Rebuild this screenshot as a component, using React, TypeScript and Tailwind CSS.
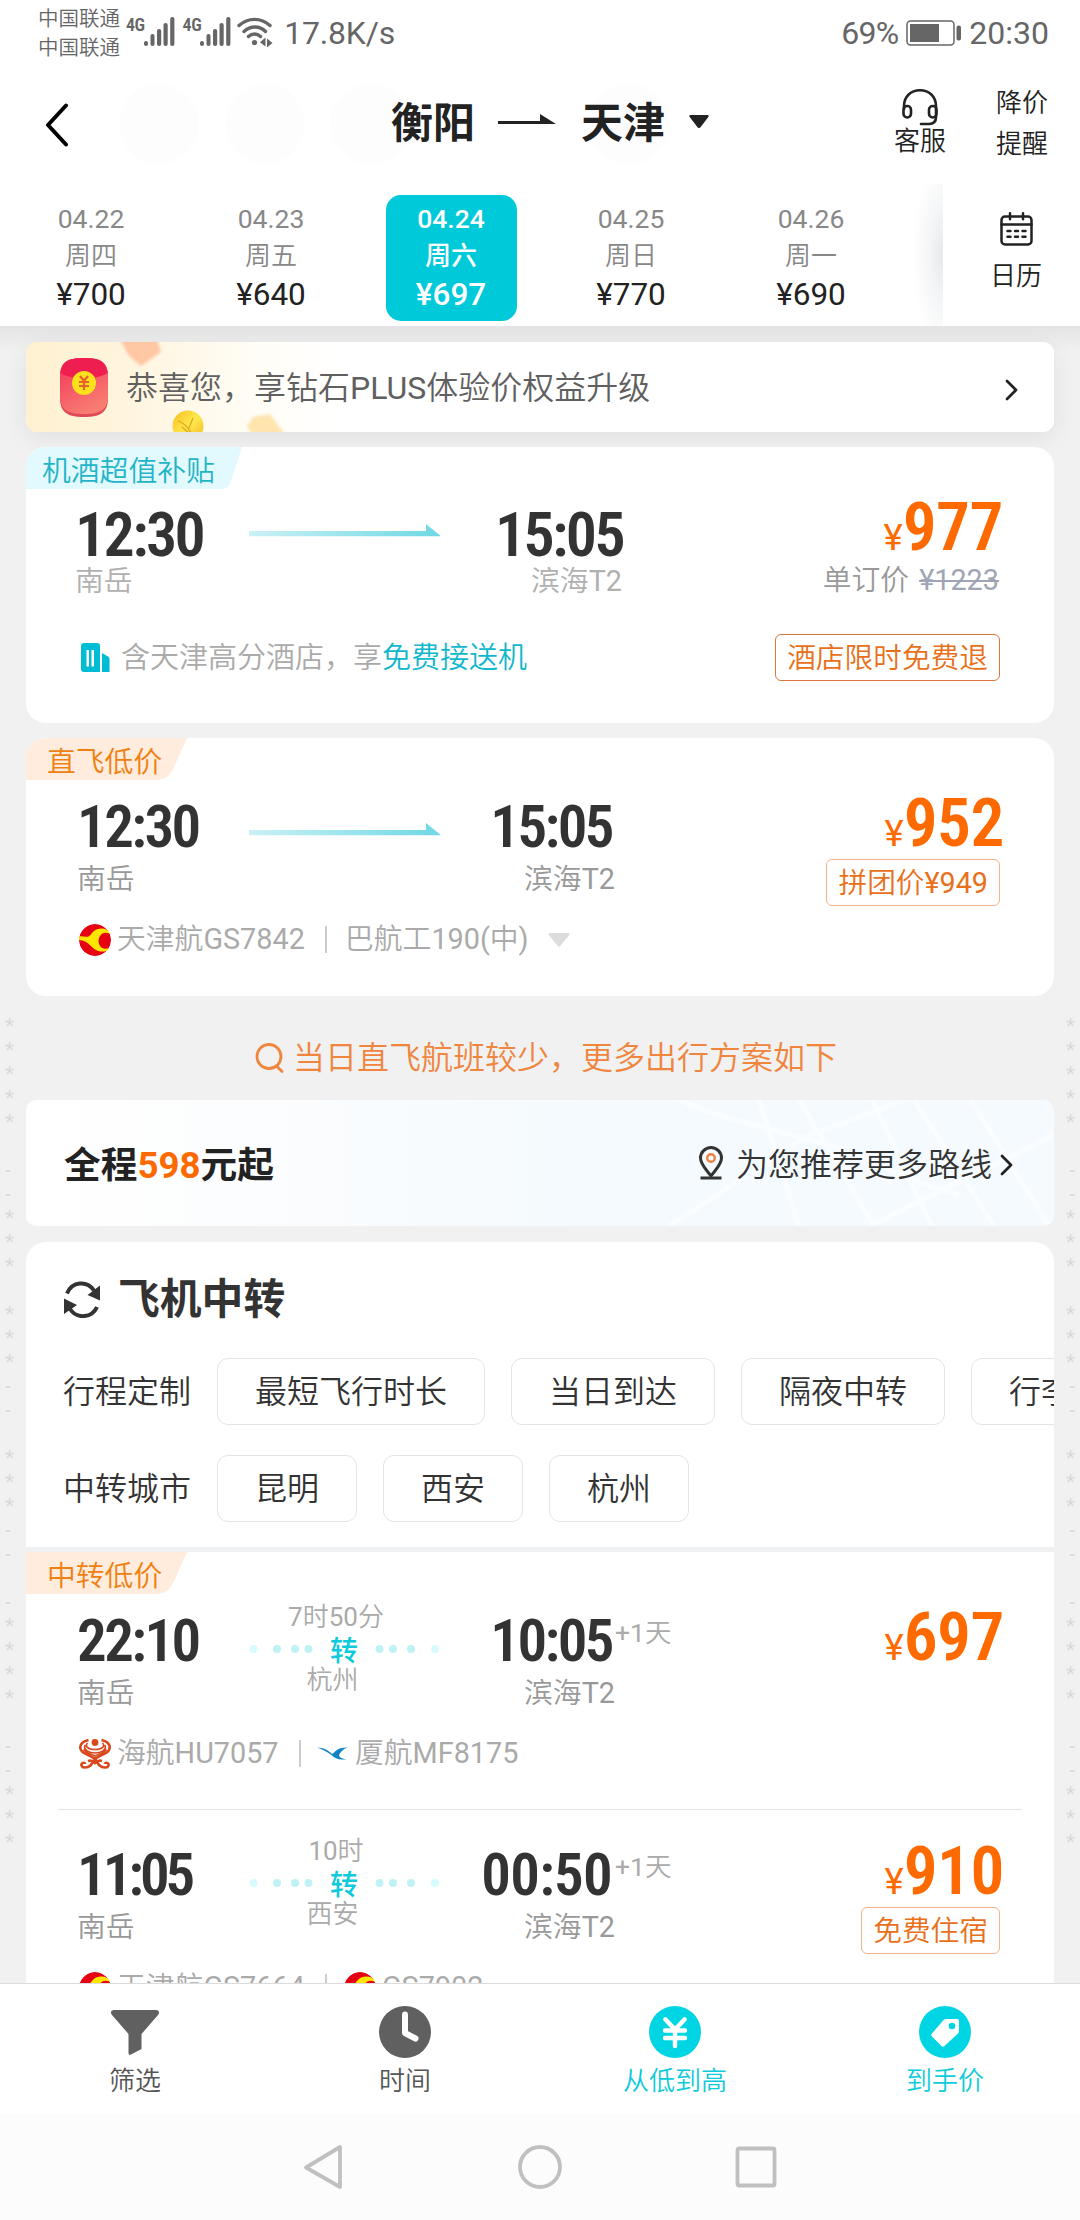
import type { ReactNode } from "react";

const days = [
  { date: "04.22", week: "周四", price: "¥700" },
  { date: "04.23", week: "周五", price: "¥640" },
  { date: "04.24", week: "周六", price: "¥697", active: true },
  { date: "04.25", week: "周日", price: "¥770" },
  { date: "04.26", week: "周一", price: "¥690" },
];

const planFilters = ["最短飞行时长", "当日到达", "隔夜中转", "行李直达"];
const cityFilters = ["昆明", "西安", "杭州"];

// watermark that runs down both page edges, one character per line
const watermark = "***** --*** ***-- ***-- -**** --***";

// the digit 1 is set tighter than the others
function digitSpacing(time: string) {
  const ones = time.split("1").length - 1;
  return [-0.7, -2.5, -4][ones];
}

function Signal() {
  return (
    <div className="flex items-start">
      <span className="font-['Roboto_Condensed'] text-[18px] leading-[18px] font-semibold tracking-[-0.5px] mt-[-1px]">4G</span>
      <svg width="31" height="30" viewBox="0 0 31 30" fill="#666" className="ml-[-1px]">
        <rect x="0" y="24" width="4" height="5" rx="2" />
        <rect x="6.5" y="17" width="4" height="12" rx="2" />
        <rect x="13" y="12" width="4.2" height="17" rx="2" />
        <rect x="19.5" y="6" width="4.2" height="23" rx="2" />
        <rect x="26.2" y="0" width="4.2" height="29" rx="2" />
      </svg>
    </div>
  );
}

function StatusBar() {
  return (
    <div className="h-[66px] flex items-start justify-between pl-[38px] pr-[31px] text-[#666]">
      <div className="flex items-start">
        <div className="text-[20.5px] leading-[29px] pt-[5px]">
          <p>中国联通</p>
          <p>中国联通</p>
        </div>
        <div className="flex pt-[17px] ml-[6px] gap-[8px]">
          <Signal />
          <Signal />
        </div>
        <svg width="36" height="30" viewBox="0 0 36 30" fill="none" stroke="#666" strokeWidth="3.4" strokeLinecap="round" className="mt-[17px] ml-[6px]">
          <path d="M2 8.5C11 .3 24 .3 33 8.5" />
          <path d="M7 14.5c6.500-6 15.500-6 21.500 0" />
          <path d="M11.500 19.500c3.500-3.300 8.500-3.300 12 0" />
          <circle cx="17.500" cy="25.500" r="2.600" fill="#666" stroke="none" />
          <path d="M28.500 20.500v9l-5.500-4.200zM30 21.500v9l5.500-4.500z" fill="#666" stroke="none" />
        </svg>
        <span className="text-[32px] leading-[32px] pt-[17px] ml-[11px] tracking-[-0.200px]">17.8K/s</span>
      </div>
      <div className="flex items-start text-[32px] leading-[32px] pt-[17px]">
        <span className="tracking-[-0.800px]">69%</span>
        <svg width="56" height="26" viewBox="0 0 56 26" className="ml-[8px] mt-[3px]">
          <rect x="1" y="1" width="47" height="24" rx="3.500" fill="none" stroke="#666" strokeWidth="1.500" />
          <rect x="4" y="4" width="29" height="18" fill="#666" />
          <rect x="50.500" y="5.500" width="4.500" height="15" rx="2" fill="#666" />
        </svg>
        <span className="ml-[7px]">20:30</span>
      </div>
    </div>
  );
}

function TitleBar() {
  return (
    <div className="relative h-[118px] flex items-start">
      <div className="absolute left-[119px] top-[18px] w-[80px] h-[80px] rounded-full bg-[#fdfdfd]" />
      <div className="absolute left-[225px] top-[18px] w-[80px] h-[80px] rounded-full bg-[#fdfdfd]" />
      <div className="absolute left-[330px] top-[18px] w-[80px] h-[80px] rounded-full bg-[#fdfdfd]" />
      <div className="absolute left-[590px] top-[18px] w-[80px] h-[80px] rounded-full bg-[#fdfdfd]" />
      <svg width="24" height="44" viewBox="0 0 24 44" fill="none" stroke="#000" strokeWidth="4" strokeLinecap="round" strokeLinejoin="round" className="ml-[45px] mt-[37px]">
        <path d="M21 2.500 3 22l18 19.500" />
      </svg>
      <div className="relative flex items-center h-[60px] mt-[27px] ml-[322px] text-[#222] text-[42px] font-['Roboto','Noto_Sans_CJK_SC',sans-serif] font-bold">
        <span>衡阳</span>
        <svg width="58" height="12" viewBox="0 0 58 12" fill="#222" className="ml-[23px] mt-[-8px]">
          <path d="M0 8h42V1l16 10H0z" />
        </svg>
        <span className="ml-[25px]">天津</span>
        <svg width="20" height="13" viewBox="0 0 20 13" fill="#222" className="ml-[24px] mt-[-3px]">
          <path d="M1.500 0h17c1 0 1.500 1 1 1.800l-8 10.400a1.800 1.800 0 0 1-3 0L.5 1.800C0 1 .5 0 1.500 0z" />
        </svg>
      </div>
      <div className="ml-auto w-[54px] flex flex-col items-center text-[26px] leading-[28px] text-[#222] pt-[22px]">
        <svg width="38" height="39" viewBox="0 0 38 39" fill="none" stroke="#222" strokeWidth="2.600" strokeLinecap="round">
          <path d="M3 21v-3C3 9 9.500 2.300 19 2.300S35 9 35 18v11c0 4.500-2.500 7-7 7h-8" />
          <rect x="2.500" y="18" width="7.500" height="11.500" rx="3.700" />
          <rect x="28" y="18" width="7.500" height="11.500" rx="3.700" />
        </svg>
        <span>客服</span>
      </div>
      <div className="ml-[49px] mr-[32px] text-[26px] leading-[41px] text-[#222] pt-[17px]">
        <p>降价</p>
        <p>提醒</p>
      </div>
    </div>
  );
}

function DateStrip() {
  return (
    <div className="h-[142px] flex">
      <div className="w-[943px] flex relative overflow-hidden pt-[11px] pl-[1px]">
        {days.map((d) => (
          <div key={d.date} className="w-[180px] shrink-0 flex justify-center">
            <div
              className={
                d.active
                  ? "w-[131px] h-[126px] rounded-[15px] bg-[#00cad9] text-white font-['Roboto','Noto_Sans_CJK_SC',sans-serif] font-medium flex flex-col items-center pt-[9px]"
                  : "w-[131px] h-[126px] text-[#888] flex flex-col items-center pt-[9px]"
              }
            >
              <span className="text-[26.500px] leading-[30px]">{d.date}</span>
              <span className="text-[26px] leading-[30px] mt-[7px]">{d.week}</span>
              <span className={d.active ? "text-[31.500px] leading-[36px] mt-[6px]" : "text-[31.500px] leading-[36px] mt-[6px] text-[#222]"}>
                {d.price}
              </span>
            </div>
          </div>
        ))}
        <div className="absolute right-0 top-0 w-[32px] h-full bg-[radial-gradient(ellipse_30px_100px_at_right,#e6e9ea_0%,#f5f6f7_50%,#fff_100%)]" />
      </div>
      <div className="flex-1 flex flex-col items-center text-[#222] pt-[28px] pl-[9px]">
        <svg width="33" height="34" viewBox="0 0 33 34" fill="none" stroke="#222" strokeWidth="2.500" strokeLinecap="round">
          <rect x="1.500" y="4.500" width="30" height="28" rx="3.500" />
          <path d="M1.500 12.500h30M10 1.300v6M23 1.300v6" />
          <path d="M7.500 19h3M15 19h3M22.500 19h3M7.500 24.700h3M15 24.700h3M22.500 24.700h3" />
        </svg>
        <span className="text-[26px] leading-[30px] mt-[15px]">日历</span>
      </div>
    </div>
  );
}

function Chevron({ className }: { className?: string }) {
  return (
    <svg width="13" height="22" viewBox="0 0 13 22" fill="none" stroke="#222" strokeWidth="2.800" strokeLinecap="round" strokeLinejoin="round" className={className}>
      <path d="m2 2 9 9-9 9" />
    </svg>
  );
}

function Banner() {
  return (
    <div className="relative h-[90px] rounded-[11px] overflow-hidden bg-[linear-gradient(90deg,#fff1d0_0px,#fff5de_100px,#fffdf6_230px,#fff_320px)] flex items-center">
      <svg width="300" height="90" viewBox="0 0 300 90" className="absolute left-0 top-0">
        <defs>
          <filter id="soft" x="-30%" y="-30%" width="160%" height="160%">
            <feGaussianBlur stdDeviation="1.800" />
          </filter>
          <linearGradient id="coin" x1="0" y1="0" x2="1" y2="1">
            <stop offset="0" stopColor="#f5bc1c" />
            <stop offset=".5" stopColor="#ffe84f" />
            <stop offset="1" stopColor="#f3b51f" />
          </linearGradient>
        </defs>
        <path d="M92-6h38l5 16-20 14-12-10z" fill="#ffc7a3" filter="url(#soft)" />
        <path d="m221 84 6-9 17-3 16 22h-34z" fill="#ffe4ae" filter="url(#soft)" />
        <circle cx="162" cy="84" r="15.500" fill="url(#coin)" />
        <path d="M152 79c6 2 10 6 13 12M167 76l-4 10M156 85l8 7" stroke="#e0a520" strokeWidth="1.300" fill="none" />
      </svg>
      <svg width="50" height="59" viewBox="0 0 50 59" className="relative ml-[33px]">
        <defs>
          <linearGradient id="packet" x1="0" y1="0" x2=".5" y2="1">
            <stop offset="0" stopColor="#f23358" />
            <stop offset="1" stopColor="#f87c72" />
          </linearGradient>
        </defs>
        <path d="M25 0C42 0 49 4 49 20v20c0 14-7 19-24 19S1 54 1 40V20C1 4 8 0 25 0z" fill="#e04a57" />
        <path d="M25 0C42 0 49 4 49 20v18c0 13-7 18-24 18S1 51 1 38V20C1 4 8 0 25 0z" fill="url(#packet)" />
        <path d="M25 0c15 0 22 3 23.700 15C38 22 12 22 1.300 15 3 3 10 0 25 0z" fill="#ee1f50" />
        <circle cx="25" cy="25" r="12" fill="#ffe01c" />
        <path d="m21 18 4 5 4-5M20 24h10M20 28h10M25 24v8" stroke="#e8622f" strokeWidth="2.200" fill="none" />
      </svg>
      <span className="relative ml-[17px] mt-[1px] text-[32px] text-[#606060]">恭喜您，享钻石PLUS体验价权益升级</span>
      <Chevron className="ml-auto mr-[36px] mt-[5px]" />
    </div>
  );
}

function Tag({ children, wide }: { children: ReactNode; wide?: boolean }) {
  if (wide) {
    return (
      <div className="relative w-[216px] h-[42px]">
        <svg width="216" height="42" viewBox="0 0 216 42" className="absolute left-0 top-0">
          <path d="M0 0h216l-11 34c-2 6-5 8-11 8H0z" fill="#e2fafd" />
        </svg>
        <span className="relative block pl-[16px] text-[28.800px] leading-[48px] text-[#1fb4c8]">{children}</span>
      </div>
    );
  }
  return (
    <div className="relative w-[161px] h-[42px]">
      <svg width="161" height="42" viewBox="0 0 161 42" className="absolute left-0 top-0">
        <path d="M0 0h161l-13 29c-4 9-9 13-19 13H0z" fill="#ffecdc" />
      </svg>
      <span className="relative block pl-[21px] text-[28.800px] leading-[48px] text-[#f08010]">{children}</span>
    </div>
  );
}

function Arrow({ id }: { id: string }) {
  return (
    <svg width="192" height="13" viewBox="0 0 192 13">
      <defs>
        <linearGradient id={id} x1="0" x2="1" y1="0" y2="0">
          <stop offset="0" stopColor="#cbf1f6" />
          <stop offset="1" stopColor="#6ed8e4" />
        </linearGradient>
      </defs>
      <path d="M0 7h177V0l15 12.300H0z" fill={`url(#${id})`} />
    </svg>
  );
}

function Price({ value }: { value: string }) {
  return (
    <div className="font-['Roboto_Condensed'] text-[#ff6a00] h-[56px] leading-[57px] whitespace-nowrap mr-[-4px]">
      <span className="font-['Roboto'] text-[36.500px] font-normal">¥</span>
      <span className="text-[67.500px] font-semibold tracking-[-0.500px]">{value}</span>
    </div>
  );
}

function OrangeBox({ children, className }: { children: ReactNode; className?: string }) {
  return (
    <div className={`h-[47px] px-[11px] rounded-[6px] border text-[28.700px] leading-[46px] text-[#e8701a] whitespace-nowrap ${className ?? ""}`}>
      {children}
    </div>
  );
}

function Via({ duration, city }: { duration: string; city: string }) {
  return (
    <div className="w-[190px] pt-[8px] text-center text-[26px] leading-[30px] text-[#aaa]">
      <p className="pr-[16px]">{duration}</p>
      <div className="flex items-center h-[33px]">
        <svg width="65" height="10" viewBox="0 0 65 10">
          <circle cx="4.500" cy="5" r="4" fill="#d8fbff" />
          <circle cx="28" cy="5" r="4" fill="#bff1f5" />
          <circle cx="46" cy="5" r="4" fill="#bff1f5" />
          <circle cx="59.500" cy="5" r="4" fill="#bff1f5" />
        </svg>
        <span className="mx-auto text-[28px] font-['Noto_Sans_CJK_SC'] font-medium text-[#0fcadb]">转</span>
        <svg width="65" height="10" viewBox="0 0 65 10">
          <circle cx="5.500" cy="5" r="4" fill="#bff1f5" />
          <circle cx="19" cy="5" r="4" fill="#bff1f5" />
          <circle cx="37" cy="5" r="4" fill="#bff1f5" />
          <circle cx="61" cy="5" r="4" fill="#d8fbff" />
        </svg>
      </div>
      <p className="pr-[23px]">{city}</p>
    </div>
  );
}

function Times({ depart, arrive, middle, nextDay }: { depart: string; arrive: string; middle: ReactNode; nextDay?: boolean }) {
  return (
    <div className="flex whitespace-nowrap">
      <div className="w-[172px] pt-[18px]">
        <p className="font-['Roboto_Condensed'] font-semibold text-[59px] leading-[57px] h-[56px] text-[#333]" style={{ letterSpacing: digitSpacing(depart) }}>
          {depart}
        </p>
        <p className="mt-[7px] text-[28.800px] leading-[36px] text-[#999]">南岳</p>
      </div>
      <div className="w-[192px]">{middle}</div>
      <div className="w-[174px] pt-[18px] text-right">
        <p className="font-['Roboto_Condensed'] font-semibold text-[59px] leading-[57px] h-[56px] text-[#333] pr-[3px]" style={{ letterSpacing: digitSpacing(arrive) }}>
          {arrive}
        </p>
        <p className="mt-[7px] text-[28.800px] leading-[36px] text-[#999]">滨海T2</p>
      </div>
      {nextDay && <span className="pt-[24px] text-[26.500px] leading-[30px] text-[#aaa]">+1天</span>}
    </div>
  );
}

function TianjinLogo() {
  return (
    <svg width="32" height="32" viewBox="0 0 32 32">
      <defs>
        <clipPath id="tianjin-disc">
          <circle cx="16" cy="16" r="16" />
        </clipPath>
      </defs>
      <g clipPath="url(#tianjin-disc)">
        <circle cx="16" cy="16" r="16" fill="#e60012" />
        <path d="M0 12.500c3-.8 6 .8 9 .2C13 11.500 13 5 22 4.500c4-.2 7 1.500 10 4.500v2c-3-3.500-9-3-11 1-2 3-2 7 0 10 2.500 3.500 7 3.500 10 1l-1 3c-4 2-9 2-13 0-6-3-7-9-17-10z" fill="#ffe600" />
      </g>
      <circle cx="25.500" cy="16.500" r="5.500" fill="#e60012" />
    </svg>
  );
}

function HainanLogo() {
  return (
    <svg width="32" height="32" viewBox="0 0 32 32" fill="none" stroke="#d9481c" strokeWidth="2.200">
      <circle cx="16" cy="4.500" r="3.400" fill="#d9481c" stroke="none" />
      <path d="M9.500 2C1 4 .5 9 2 12c2 4.500 10 5 14 9 4-4 12-4.500 14-9 1.500-3 1-8-7.500-10" strokeWidth="2.600" />
      <path d="M8.500 5c-3 3 0 6.500 7.500 6.500S26.500 8 23.500 5M6 7c-2 5 4 8 10 8s12-3 10-8M4.500 11.500C7 16 12 16 16 18c4-2 9-2 11.500-6.500" strokeWidth="1.700" />
      <path d="M16 21c-3 5-5 8.500-10 8.500-3 0-4-2-3.500-3.500s3.500-2 3.500 0M16 21c3 5 5 8.500 10 8.500 3 0 4-2 3.500-3.500s-3.500-2-3.500 0M9 23c3-1 5 0 7 2 2-2 4-3 7-2" strokeWidth="2.600" />
    </svg>
  );
}

function XiamenLogo() {
  return (
    <svg width="32" height="32" viewBox="0 0 32 32" fill="#0d84c4">
      <path d="M0 9.500c5 .2 10 1.500 15 6.500 4-2 4-6.500 15.500-6.500C26 11 24 13.500 22.500 16c-1.500 2.500 1.500 5 7 5-7 1.800-12-1-14.500-3.500C10 13.500 4 11 0 9.500z" />
    </svg>
  );
}

function Separator() {
  return <div className="w-[2px] h-[27px] bg-[#ccc] mt-[-2px]" />;
}

function Chip({ children }: { children: ReactNode }) {
  return (
    <div className="h-[67px] px-[37px] shrink-0 rounded-[11px] border border-[#e2e4e6] text-[32px] leading-[67px] text-[#333] whitespace-nowrap">
      {children}
    </div>
  );
}

function Gutter({ right }: { right?: boolean }) {
  return (
    <div className={right ? "w-[26px] shrink-0 pt-[688px] pr-[5px] text-right" : "w-[26px] shrink-0 pt-[688px] pl-[5px]"}>
      {watermark.split("").map((c, i) => (
        <p key={i} className="h-[24px] text-[21px] leading-[24px] text-[#d9d9d9]">
          {c}
        </p>
      ))}
    </div>
  );
}

function HotelCard() {
  return (
    <div className="h-[276px] shrink-0 mt-[15px] rounded-[20px] bg-white overflow-hidden">
      <Tag wide>机酒超值补贴</Tag>
      <div className="flex justify-between pl-[49px] pr-[55px] whitespace-nowrap">
        <div className="flex">
          <div className="w-[174px] pt-[18px]">
            <p className="font-['Roboto_Condensed'] font-semibold text-[62px] leading-[56px] tracking-[-2.600px] text-[#333]">12:30</p>
            <p className="text-[28.800px] leading-[36px] text-[#b0b0b0]">南岳</p>
          </div>
          <div className="w-[192px] pt-[35px]">
            <Arrow id="arrow-hotel" />
          </div>
          <div className="w-[182px] pt-[18px] text-right">
            <p className="font-['Roboto_Condensed'] font-semibold text-[62px] leading-[56px] tracking-[-2.600px] text-[#333]">15:05</p>
            <p className="text-[28.800px] leading-[36px] text-[#b0b0b0] pr-px">滨海T2</p>
          </div>
        </div>
        <div className="flex flex-col items-end pt-[9px]">
          <Price value="977" />
          <div className="mt-[8px] text-[28.800px] leading-[36px] text-[#999]">
            单订价
            <span className="ml-[10px] text-[#a0a5b5] line-through decoration-2">¥1223</span>
          </div>
        </div>
      </div>
      <div className="flex items-center h-[48px] mt-[34px] pl-[55px] pr-[54px]">
        <svg width="29" height="29" viewBox="0 0 29 29" fill="#00bcd4">
          <path d="M3 0h13c2 0 3 1 3 3v26H3c-2 0-3-1-3-3V3c0-2 1-3 3-3zm2.500 7v16.500h2.500V7zm5 0v16.500H13V7zM21 10l6 3.500c1 .6 1.500 1.500 1.500 2.500v13H21z" fillRule="evenodd" />
        </svg>
        <span className="ml-[11px] mt-[3px] text-[29px] text-[#aaa]">
          含天津高分酒店，享<span className="text-[#0fb8cc]">免费接送机</span>
        </span>
        <OrangeBox className="ml-auto border-[#d9783c]">酒店限时免费退</OrangeBox>
      </div>
    </div>
  );
}

function DirectCard() {
  return (
    <div className="h-[258px] shrink-0 mt-[15px] rounded-[20px] bg-white overflow-hidden">
      <Tag>直飞低价</Tag>
      <div className="flex justify-between pl-[51px] pr-[54px] h-[117px]">
        <Times
          depart="12:30"
          arrive="15:05"
          middle={
            <div className="pt-[43px]">
              <Arrow id="arrow-direct" />
            </div>
          }
        />
        <div className="flex flex-col items-end pt-[14px]">
          <Price value="952" />
          <OrangeBox className="mt-[9px] border-[#f0b48c]">拼团价¥949</OrangeBox>
        </div>
      </div>
      <div className="flex items-center mt-[25px] pl-[53px] h-[36px] text-[28.800px] text-[#aaa] whitespace-nowrap">
        <TianjinLogo />
        <span className="ml-[6px] w-[208px]">天津航GS7842</span>
        <Separator />
        <span className="ml-[18px]">巴航工190(中)</span>
        <svg width="22" height="14" viewBox="0 0 22 14" fill="#dcdcdc" className="ml-[19px]">
          <path d="M2 0h18c1.300 0 2 1 1 2.200l-8.500 10.500a2 2 0 0 1-3 0L1 2.200C0 1 .7 0 2 0z" />
        </svg>
      </div>
    </div>
  );
}

function RouteBanner() {
  return (
    <div className="relative h-[126px] shrink-0 rounded-[10px] overflow-hidden bg-[linear-gradient(90deg,#fff_0%,#fcfdfe_20%,#f4fafe_55%,#f4fafe_100%)] flex items-center pl-[38px] pr-[41px]">
      <svg width="440" height="126" viewBox="0 0 440 126" fill="none" stroke="#fafdff" className="absolute right-0 top-0">
        <path d="M65 0c50 22 100 30 150 45s60 30 130 50M55 126 190 38 290 0M145 0l40 126M185 0l75 126M258 0l60 126M300 0l80 126M357 0l78 126M255 126 440 35" strokeWidth="5" />
      </svg>
      <p className="relative text-[36.700px] font-['Roboto','Noto_Sans_CJK_SC',sans-serif] font-bold text-[#222] mt-[5px]">
        全程<span className="text-[#ff6a00]">598</span>元起
      </p>
      <svg width="26" height="34" viewBox="0 0 26 34" fill="none" stroke="#333" strokeWidth="3" className="relative ml-auto mt-[-1px]">
        <path d="M13 30C8 23 2.500 18.500 2.500 12a10.500 10.500 0 0 1 21 0C23.500 18.500 18 23 13 30z" />
        <path d="M2.500 32h21" strokeWidth="2.800" />
        <circle cx="13" cy="12" r="3.800" stroke="#f0803c" strokeWidth="2.400" />
      </svg>
      <span className="relative ml-[12px] mt-[4px] text-[32px] text-[#333]">为您推荐更多路线</span>
      <Chevron className="relative ml-[8px] mt-[4px]" />
    </div>
  );
}

function TransferCard() {
  return (
    <div className="mt-[16px] rounded-t-[20px] bg-white overflow-hidden shrink-0">
      <div className="h-[305px]">
        <div className="flex items-center pl-[38px] pt-[28px] h-[86px] text-[#333]">
          <svg width="36" height="37" viewBox="0 0 36 37" fill="none" stroke="#333" strokeWidth="4">
            <path d="M3 12.500C8 .5 23 -1 30 9.500M33 26C28 37 13 38.500 6 28" />
            <path d="M36 4.500v15L23.500 14zM0 17.500l13 6.500L0 33z" fill="#333" stroke="none" />
          </svg>
          <span className="ml-[18px] mt-[3px] text-[41.800px] font-['Roboto','Noto_Sans_CJK_SC',sans-serif] font-bold">飞机中转</span>
        </div>
        <div className="flex items-center mt-[30px] pl-[37px] text-[32px] text-[#333] whitespace-nowrap">
          <span className="w-[154px] shrink-0 h-[67px] leading-[69px]">行程定制</span>
          <div className="flex gap-[26px]">
            {planFilters.map((f) => (
              <Chip key={f}>{f}</Chip>
            ))}
          </div>
        </div>
        <div className="flex items-center mt-[30px] pl-[37px] text-[32px] text-[#333] whitespace-nowrap">
          <span className="w-[154px] shrink-0 h-[67px] leading-[69px]">中转城市</span>
          <div className="flex gap-[26px]">
            {cityFilters.map((f) => (
              <Chip key={f}>{f}</Chip>
            ))}
          </div>
        </div>
      </div>
      <div className="h-[5px] bg-[#eff1f3]" />

      <Tag>中转低价</Tag>
      <div className="flex justify-between pl-[51px] pr-[54px] h-[117px]">
        <Times depart="22:10" arrive="10:05" nextDay middle={<Via duration="7时50分" city="杭州" />} />
        <div className="pt-[14px]">
          <Price value="697" />
        </div>
      </div>
      <div className="flex items-center mt-[25px] pl-[53px] h-[36px] text-[28.800px] text-[#aaa] whitespace-nowrap">
        <HainanLogo />
        <span className="ml-[6px] w-[182px]">海航HU7057</span>
        <Separator />
        <span className="ml-[16px]">
          <XiamenLogo />
        </span>
        <span className="ml-[6px]">厦航MF8175</span>
      </div>
      <div className="mt-[37px] mb-[18px] mx-[32px] h-px bg-[#e4e4e4]" />

      <div className="flex justify-between pl-[51px] pr-[54px] h-[117px]">
        <Times depart="11:05" arrive="00:50" nextDay middle={<Via duration="10时" city="西安" />} />
        <div className="flex flex-col items-end pt-[14px]">
          <Price value="910" />
          <OrangeBox className="mt-[9px] border-[#f0b48c]">免费住宿</OrangeBox>
        </div>
      </div>
      <div className="flex items-center mt-[25px] pl-[53px] h-[36px] text-[28.800px] text-[#aaa] whitespace-nowrap">
        <TianjinLogo />
        <span className="ml-[6px] w-[208px]">天津航GS7664</span>
        <Separator />
        <span className="ml-[17px]">
          <TianjinLogo />
        </span>
        <span className="ml-[6px]">GS7902</span>
      </div>
    </div>
  );
}

function BottomBar() {
  return (
    <div className="h-[131px] border-t border-[#dcdcdc] bg-white flex text-[26px] leading-[30px]">
      <div className="w-1/4 flex flex-col items-center pt-[21px] text-[#555]">
        <svg width="54" height="54" viewBox="0 0 54 54" fill="#606060">
          <path d="M6 5h42c3 0 4 2.500 2 5L33.500 29v15L23 49.500c-1.500.8-2.500 0-2.500-1.500V29L4 10C2 7.500 3 5 6 5z" />
        </svg>
        <span className="mt-[7px]">筛选</span>
      </div>
      <div className="w-1/4 flex flex-col items-center pt-[21px] text-[#555]">
        <svg width="54" height="54" viewBox="0 0 54 54">
          <circle cx="27" cy="27" r="26" fill="#606060" />
          <path d="M27 9.500V28l10.500 5.500" fill="none" stroke="#fff" strokeWidth="6" strokeLinecap="round" strokeLinejoin="round" />
        </svg>
        <span className="mt-[7px]">时间</span>
      </div>
      <div className="w-1/4 flex flex-col items-center pt-[21px] text-[#0fcadb]">
        <svg width="54" height="54" viewBox="0 0 54 54">
          <circle cx="27" cy="27" r="26" fill="#00d5e4" />
          <path d="m17.500 14.500 9.500 10 9.500-10M17 25.500h20M17 33h20M27 25v16" fill="none" stroke="#fff" strokeWidth="4.500" strokeLinecap="round" />
        </svg>
        <span className="mt-[7px]">从低到高</span>
      </div>
      <div className="w-1/4 flex flex-col items-center pt-[21px] text-[#0fcadb]">
        <svg width="54" height="54" viewBox="0 0 54 54">
          <circle cx="27" cy="27" r="26" fill="#00d5e4" />
          <path d="M28 14h11c1.500 0 2 .7 2 2v10c0 1-.4 2-1 2.600L26.500 41c-1 1-2 1-3 0L14 31.500c-1-1-1-2 0-3L25.500 15c.6-.6 1.500-1 2.500-1z" fill="#fff" />
          <circle cx="34" cy="21" r="3.300" fill="#00d5e4" />
        </svg>
        <span className="mt-[7px]">到手价</span>
      </div>
    </div>
  );
}

function SystemNav() {
  return (
    <div className="h-[106px] bg-[#fcfcfc] flex items-center justify-center">
      <svg width="44" height="46" viewBox="0 0 44 46" fill="none" stroke="#c0c0c0" strokeWidth="3.800" strokeLinejoin="round" className="mr-[171px]">
        <path d="M38 3v40L4 23.500z" />
      </svg>
      <svg width="46" height="46" viewBox="0 0 46 46" fill="none" stroke="#c0c0c0" strokeWidth="3.800" className="mt-[-1px]">
        <circle cx="23" cy="23" r="20" />
      </svg>
      <svg width="44" height="44" viewBox="0 0 44 44" fill="none" stroke="#c0c0c0" strokeWidth="3.800" className="ml-[171px]">
        <rect x="3.500" y="3.500" width="37" height="37" rx="1.500" />
      </svg>
    </div>
  );
}

export default function App() {
  return (
    <div className="w-[1080px] h-[2220px] overflow-hidden flex flex-col bg-white font-['Roboto','Noto_Sans_CJK_SC_DemiLight','Noto_Sans_CJK_SC',sans-serif] font-normal">
      <header className="h-[326px] shrink-0">
        <StatusBar />
        <TitleBar />
        <DateStrip />
      </header>

      <main className="flex-1 min-h-0 overflow-hidden flex bg-[linear-gradient(180deg,#e3e3e3_0px,#e9e9e9_10px,#f1f1f1_26px)]">
        <Gutter />
        <div className="flex-1 min-w-0 flex flex-col pt-[16px]">
          <div className="shrink-0 rounded-[11px] shadow-[0_6px_24px_rgba(0,0,0,0.07)]">
            <Banner />
          </div>
          <HotelCard />
          <DirectCard />
          <div className="h-[104px] shrink-0 flex items-center justify-center pt-[19px] pl-[12px] text-[#f0853e]">
            <svg width="30" height="32" viewBox="0 0 30 32" fill="none" stroke="#f0853e" strokeWidth="2.800" strokeLinecap="round">
              <circle cx="14" cy="14.500" r="12" />
              <path d="m21.500 24 5.500 5.500" />
            </svg>
            <span className="ml-[8px] text-[32px]">当日直飞航班较少，更多出行方案如下</span>
          </div>
          <RouteBanner />
          <TransferCard />
        </div>
        <Gutter right />
      </main>

      <BottomBar />
      <SystemNav />
    </div>
  );
}
